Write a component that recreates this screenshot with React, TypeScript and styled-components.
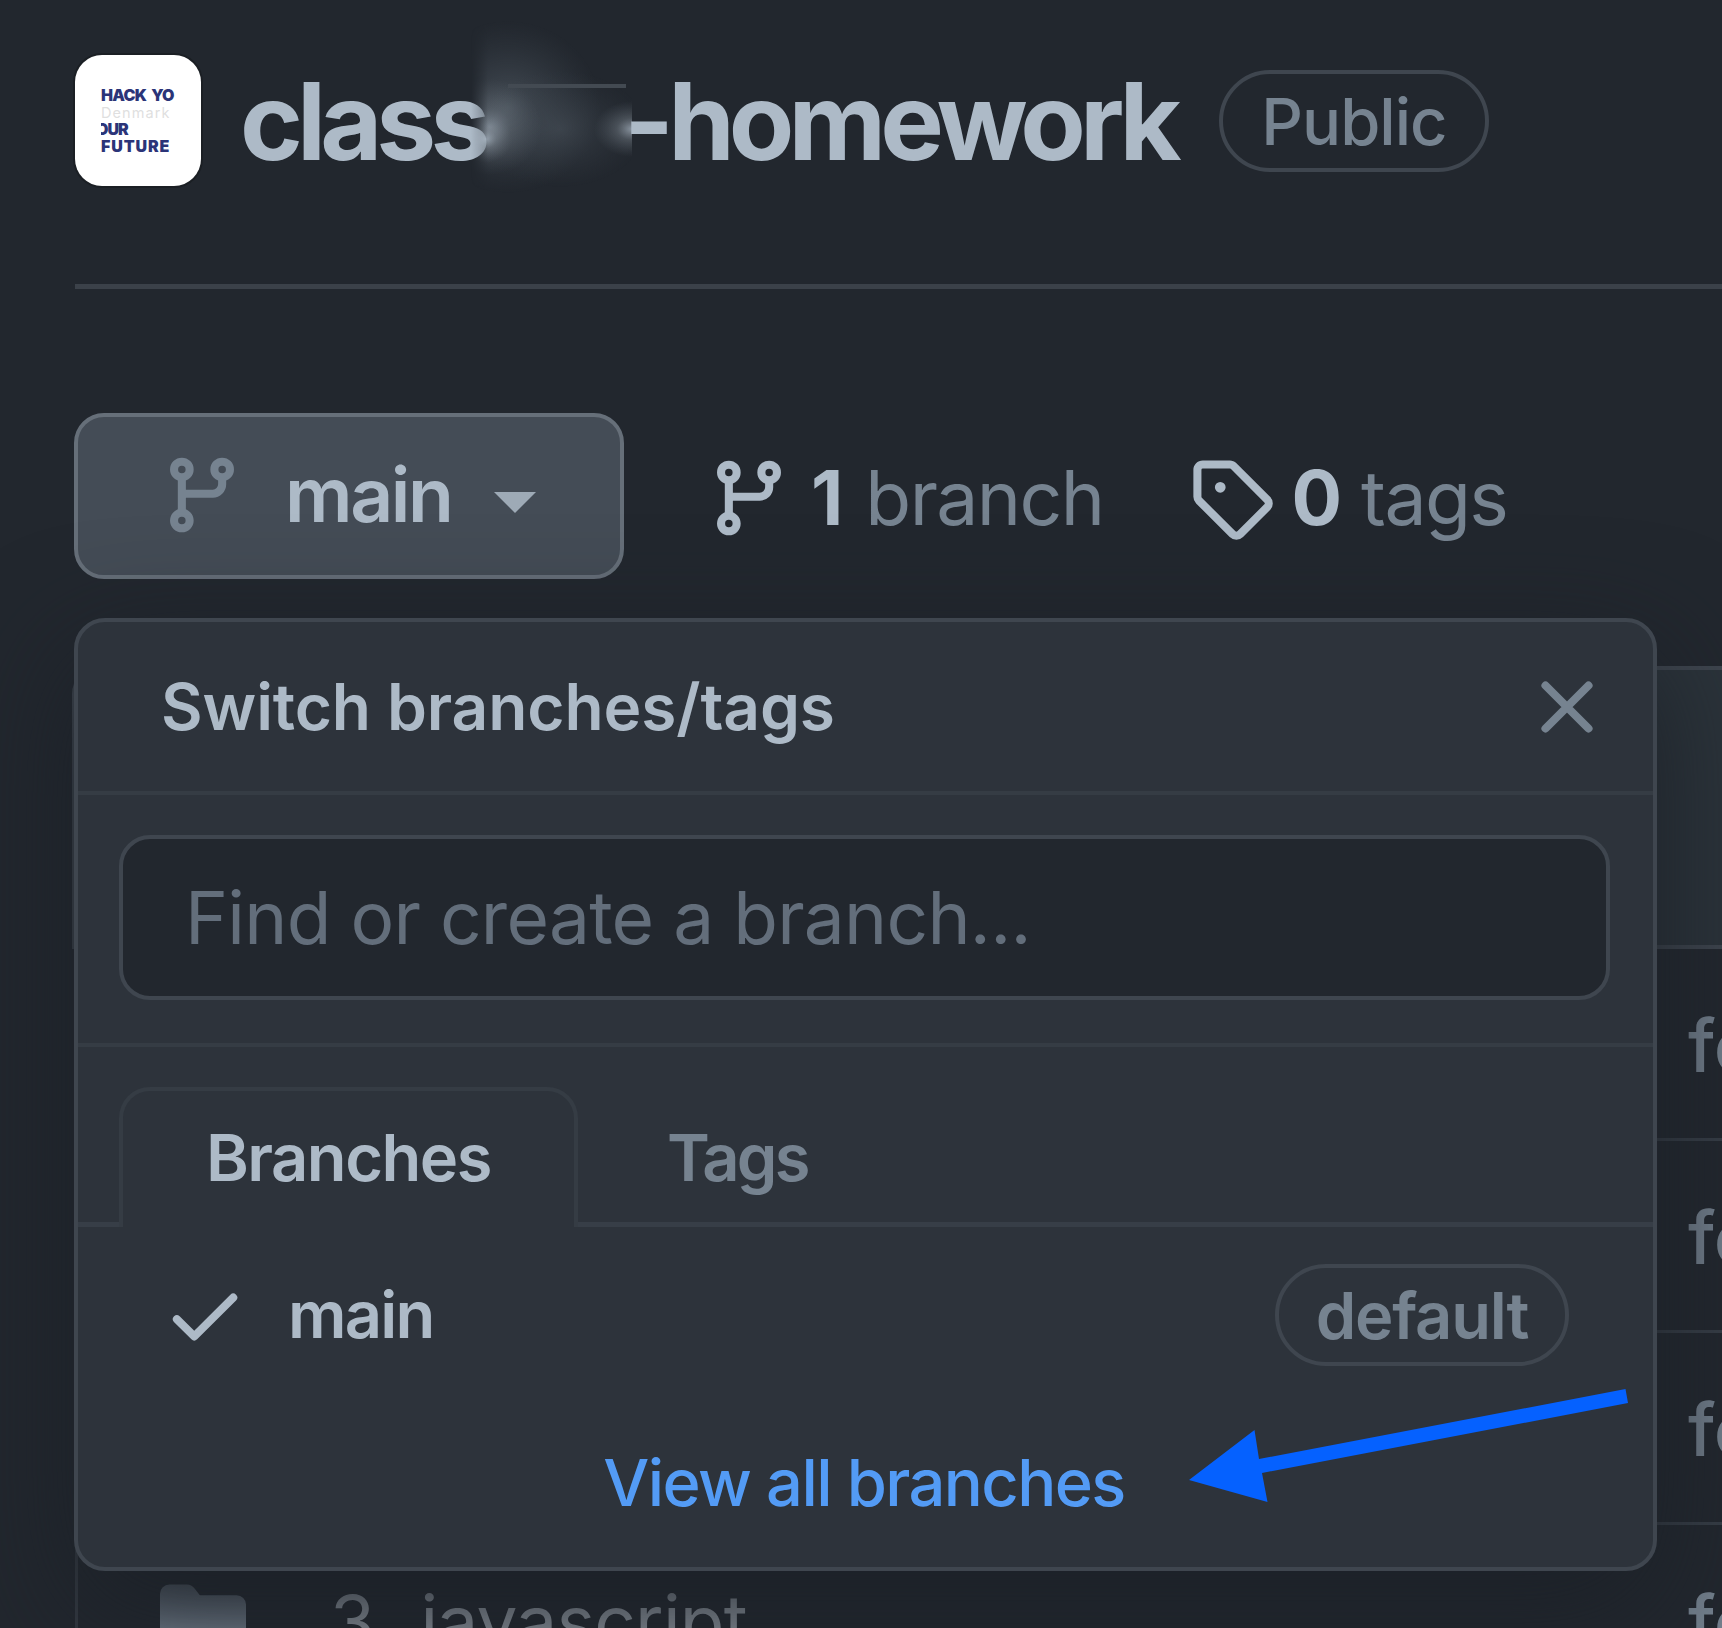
import React from "react";
import styled, { createGlobalStyle } from "styled-components";

const Global = createGlobalStyle`
  *, *::before, *::after { box-sizing: border-box; }
  body { margin: 0; background: #22272e; }
`;

const Page = styled.main`
  position: relative;
  width: 1722px;
  height: 1628px;
  overflow: hidden;
  background: #22272e;
  color: #adbac7;
  font-family: Inter, "Liberation Sans", sans-serif;
`;

const Label = styled.span<{
  $size: number;
  $weight?: number;
  $spacing?: number;
  $color?: string;
  $gap?: number;
  $width?: number;
}>`
  flex: none;
  width: ${(p) => (p.$width ? `${p.$width}px` : "auto")};
  margin-left: ${(p) => p.$gap ?? 0}px;
  font-size: ${(p) => p.$size}px;
  font-weight: ${(p) => p.$weight ?? 400};
  letter-spacing: ${(p) => p.$spacing ?? 0}px;
  color: ${(p) => p.$color ?? "#adbac7"};
  line-height: 1.2;
  white-space: nowrap;
`;

const RepoHeader = styled.header`
  display: flex;
  align-items: center;
  height: 186px;
  padding: 55px 0 0 75px;
`;

const Avatar = styled.div`
  display: flex;
  flex-direction: column;
  flex: none;
  width: 126px;
  height: 131px;
  margin-right: 39px;
  padding: 32px 25px 0 26px;
  border-radius: 27px;
  background: #fff;
  box-shadow: 0 0 0 2px #1b1f24;
`;

const AvatarLine = styled.span<{ $faint?: boolean; $spacing?: number; $indent?: number }>`
  overflow: hidden;
  width: 75px;
  height: 17px;
  font-size: ${(p) => (p.$faint ? 14.5 : 16)}px;
  font-weight: ${(p) => (p.$faint ? 400 : 900)};
  letter-spacing: ${(p) => p.$spacing ?? 0}px;
  text-indent: ${(p) => p.$indent ?? 0}px;
  line-height: 17px;
  white-space: pre;
  color: ${(p) => (p.$faint ? "#dfdfdf" : "#2b3478")};
`;

const RepoName = styled.h1`
  display: flex;
  align-items: center;
  margin: 0;
  padding-top: 1px;
`;

const Smudge = styled.svg`
  flex: none;
  width: 165px;
  height: 200px;
  margin: -40px -11px -40px -20px;
`;

const Pill = styled.span<{ $width: number }>`
  display: flex;
  align-items: center;
  justify-content: center;
  flex: none;
  width: ${(p) => p.$width}px;
  height: 102px;
  padding-top: 2px;
  border: 4px solid #3f464f;
  border-radius: 51px;
`;

const Rule = styled.hr`
  height: 5px;
  margin: 98px 0 0 75px;
  border: 0;
  background: #3b4149;
`;

const Toolbar = styled.div`
  display: flex;
  align-items: center;
  height: 167px;
  margin: 123px 0 0 74px;
`;

const BranchButton = styled.button`
  display: flex;
  align-items: center;
  flex: none;
  width: 550px;
  height: 166px;
  padding: 0 0 1px 81px;
  border: 4px solid #666f79;
  border-radius: 30px;
  background: #444c56;
  font-family: inherit;
`;

const Caret = styled.i`
  width: 0;
  height: 0;
  margin: 15px 0 0 42px;
  border: 21px solid transparent;
  border-top-color: #9eaab6;
  border-bottom: 0;
`;

const Stat = styled.span<{ $gap: number }>`
  display: flex;
  align-items: center;
  margin: 5px 0 0 ${(p) => p.$gap}px;
`;

const FileTable = styled.section`
  height: 1000px;
  margin: 87px 0 0 75px;
  border-left: 3px solid #343a42;
`;

const CommitBar = styled.div`
  height: 283px;
  margin-left: -6px;
  border: 4px solid #3f464f;
  border-right: 0;
  border-radius: 28px 0 0 0;
  background: #2b333a;
`;

const FileRow = styled.div`
  display: flex;
  align-items: center;
  height: 192px;
  padding: 4px 0 0 82px;
  border-bottom: 3px solid #373e47;
`;

const FileName = styled.div`
  display: flex;
  align-items: center;
  flex: none;
  width: 1528px;
`;

const Menu = styled.div`
  position: absolute;
  left: 74px;
  top: 618px;
  display: flex;
  flex-direction: column;
  width: 1583px;
  height: 953px;
  border: 4px solid #3f464f;
  border-radius: 31px;
  background: #2d333b;
  box-shadow: 0 40px 120px #1c2128;
`;

const MenuHeader = styled.div`
  display: flex;
  align-items: center;
  justify-content: space-between;
  height: 173px;
  padding: 1px 43px 0 83px;
  border-bottom: 4px solid #353c44;
`;

const Filter = styled.div`
  height: 252px;
  padding: 40px 43px 0 41px;
  border-bottom: 4px solid #353c44;
`;

const Field = styled.div`
  display: flex;
  align-items: center;
  height: 165px;
  padding-left: 62px;
  border: 4px solid #3f464f;
  border-radius: 31px;
  background: #22272e;
`;

const Tabs = styled.div`
  display: flex;
  height: 180px;
`;

const TabLine = styled.div<{ $grow?: boolean }>`
  flex: ${(p) => (p.$grow ? "1" : "0 0 41px")};
  display: flex;
  align-items: center;
  padding: 46px 0 0 ${(p) => (p.$grow ? 89 : 0)}px;
  border-bottom: 5px solid #373e47;
`;

const ActiveTab = styled.div`
  display: flex;
  align-items: center;
  width: 459px;
  margin-top: 40px;
  padding: 0 0 2px 83px;
  border: 4px solid #353c44;
  border-bottom: 0;
  border-radius: 31px 31px 0 0;
`;

const BranchItem = styled.div`
  display: flex;
  align-items: center;
  height: 175px;
  padding: 0 84px 0 84px;
`;

const Push = styled.div`
  flex: 1;
`;

const MenuFooter = styled.div`
  display: flex;
  align-items: center;
  justify-content: center;
  flex: 1;
  padding: 0 3px 3px 0;
`;

const Pointer = styled.svg`
  position: absolute;
  left: 1180px;
  top: 1380px;
  width: 460px;
  height: 130px;
`;

const Icon = styled.svg`
  flex: none;
  width: 86px;
  height: 86px;
`;

function BranchIcon({ color }: { color: string }) {
  return (
    <Icon viewBox="0 0 16 16" fill="none" stroke={color} strokeWidth="1.5">
      <circle cx="4.25" cy="3.25" r="1.45" />
      <circle cx="11.75" cy="3.25" r="1.45" />
      <circle cx="4.25" cy="12.75" r="1.45" />
      <path d="M4.25 4.8v6.4M11.75 4.8V6A1.75 1.75 0 0 1 10 7.75H4.25" />
    </Icon>
  );
}

function TagIcon() {
  return (
    <Icon viewBox="0 0 16 16" fill="#adbac7" fillRule="evenodd">
      <path d="M2.5 7.775V2.75a.25.25 0 0 1 .25-.25h5.025a.25.25 0 0 1 .177.073l6.25 6.25a.25.25 0 0 1 0 .354l-5.025 5.025a.25.25 0 0 1-.354 0l-6.25-6.25a.25.25 0 0 1-.073-.177zm-1.5 0V2.75C1 1.784 1.784 1 2.75 1h5.025c.464 0 .91.184 1.238.513l6.25 6.25a1.75 1.75 0 0 1 0 2.474l-5.026 5.026a1.75 1.75 0 0 1-2.474 0l-6.25-6.25A1.75 1.75 0 0 1 1 7.775zM6 5a1 1 0 1 0 0 2 1 1 0 0 0 0-2z" />
    </Icon>
  );
}

function CloseIcon() {
  return (
    <Icon viewBox="0 0 16 16" fill="none" stroke="#768390" strokeWidth="1.5" strokeLinecap="round">
      <path d="M4 4l8 8M12 4l-8 8" />
    </Icon>
  );
}

function CheckIcon() {
  return (
    <Icon viewBox="0 0 16 16" fill="#adbac7">
      <path d="M13.78 4.22a.75.75 0 0 1 0 1.06l-7.25 7.25a.75.75 0 0 1-1.06 0L2.22 9.28a.75.75 0 0 1 1.06-1.06L6 10.94l6.72-6.72a.75.75 0 0 1 1.06 0z" />
    </Icon>
  );
}

function FolderIcon() {
  return (
    <Icon viewBox="0 0 16 16">
      <defs>
        <linearGradient id="folder" x1="0" y1="0" x2="0" y2="1">
          <stop offset="0" stopColor="#5a646f" />
          <stop offset=".6" stopColor="#7b8896" />
        </linearGradient>
      </defs>
      <path
        fill="url(#folder)"
        d="M1.75 1A1.75 1.75 0 0 0 0 2.75v10.5C0 14.216.784 15 1.75 15h12.5A1.75 1.75 0 0 0 16 13.25v-8.5A1.75 1.75 0 0 0 14.25 3H7.5a.25.25 0 0 1-.2-.1l-.9-1.2C6.07 1.26 5.55 1 5 1H1.75z"
      />
    </Icon>
  );
}

const rows = ["", "", "", "3_"];

export default function App() {
  return (
    <Page>
      <Global />
      <RepoHeader>
        <Avatar>
          <AvatarLine $spacing={-0.7}>HACK  YO</AvatarLine>
          <AvatarLine $faint $spacing={1.1}>Denmark</AvatarLine>
          <AvatarLine $spacing={-1} $indent={-5}>OUR</AvatarLine>
          <AvatarLine $spacing={0.9}>FUTURE</AvatarLine>
        </Avatar>
        <RepoName>
          <Label $size={107} $weight={700} $spacing={-5.9} $width={250}>class</Label>
          <Smudge viewBox="470 20 165 200">
            <defs>
              <radialGradient id="haze">
                <stop offset="0" stopColor="#4c555e" stopOpacity=".85" />
                <stop offset=".5" stopColor="#424a53" stopOpacity=".45" />
                <stop offset="1" stopColor="#3a424a" stopOpacity="0" />
              </radialGradient>
              <radialGradient id="spot">
                <stop offset="0" stopColor="#adbac7" stopOpacity=".75" />
                <stop offset=".4" stopColor="#8b959f" stopOpacity=".35" />
                <stop offset="1" stopColor="#6a737d" stopOpacity="0" />
              </radialGradient>
              <linearGradient id="edge" gradientUnits="userSpaceOnUse" x1="471" y1="0" x2="488" y2="0">
                <stop offset="0" stopColor="#000" />
                <stop offset="1" stopColor="#fff" />
              </linearGradient>
              <mask id="fade" maskUnits="userSpaceOnUse" x="470" y="20" width="165" height="200">
                <rect x="470" y="20" width="162" height="200" fill="url(#edge)" />
              </mask>
            </defs>
            <path d="M477 80h14v30Q481 104 477 98z" fill="#22272e" />
            <g mask="url(#fade)">
              <ellipse cx="508" cy="106" rx="92" ry="86" fill="url(#haze)" />
              <ellipse cx="560" cy="128" rx="85" ry="58" fill="url(#haze)" opacity=".6" />
              <ellipse cx="490" cy="126" rx="52" ry="48" fill="url(#spot)" opacity=".75" />
              <ellipse cx="486" cy="138" rx="26" ry="24" fill="url(#spot)" />
              <ellipse cx="632" cy="128" rx="38" ry="28" fill="url(#spot)" />
            </g>
            <rect x="508" y="83" width="118" height="4" fill="#434a52" />
          </Smudge>
          <Label $size={107} $weight={700} $spacing={-5.9} $width={595}>-homework</Label>
        </RepoName>
        <Pill $width={270}>
          <Label $size={65} $weight={500} $spacing={-1} $color="#768390">Public</Label>
        </Pill>
      </RepoHeader>
      <Rule />
      <Toolbar>
        <BranchButton>
          <BranchIcon color="#768390" />
          <Label $size={75} $weight={600} $spacing={-2.4} $gap={40}>main</Label>
          <Caret />
        </BranchButton>
        <Stat $gap={82}>
          <BranchIcon color="#adbac7" />
          <Label $size={75} $weight={700} $gap={19}>1</Label>
          <Label $size={75} $spacing={-1.6} $gap={22} $color="#768390">branch</Label>
        </Stat>
        <Stat $gap={84}>
          <TagIcon />
          <Label $size={75} $weight={700} $gap={18}>0</Label>
          <Label $size={75} $spacing={-1.6} $gap={19} $color="#768390">tags</Label>
        </Stat>
      </Toolbar>
      <FileTable>
        <CommitBar />
        {rows.map((prefix, i) => (
          <FileRow key={i}>
            <FileName>
              {prefix && (
                <>
                  <FolderIcon />
                  <Label $size={73} $spacing={6} $gap={84} $color="#9aa2ab">{prefix}</Label>
                  <Label $size={73} $spacing={-0.8} $color="#9aa2ab">javascript</Label>
                </>
              )}
            </FileName>
            <Label $size={73} $weight={500} $color="#768390">fe</Label>
          </FileRow>
        ))}
      </FileTable>
      <Menu>
        <MenuHeader>
          <Label $size={64} $weight={600} $spacing={-0.1}>Switch branches/tags</Label>
          <CloseIcon />
        </MenuHeader>
        <Filter>
          <Field>
            <Label $size={73} $spacing={-0.75} $color="#636e7b">Find or create a branch...</Label>
          </Field>
        </Filter>
        <Tabs>
          <TabLine />
          <ActiveTab>
            <Label $size={65} $weight={600} $spacing={-1.5}>Branches</Label>
          </ActiveTab>
          <TabLine $grow>
            <Label $size={65} $weight={600} $spacing={-2.8} $color="#768390">Tags</Label>
          </TabLine>
        </Tabs>
        <BranchItem>
          <CheckIcon />
          <Label $size={65} $weight={600} $spacing={-1.8} $gap={40}>main</Label>
          <Push />
          <Pill $width={294}>
            <Label $size={65} $weight={600} $spacing={-1.2} $color="#768390">default</Label>
          </Pill>
        </BranchItem>
        <MenuFooter>
          <Label $size={65} $weight={500} $spacing={-1.6} $color="#539bf5">View all branches</Label>
        </MenuFooter>
      </Menu>
      <Pointer viewBox="1180 1380 460 130">
        <path fill="#0561ff" d="M1189 1480L1254.500 1430L1259 1459L1625.500 1389L1628 1403L1262 1473L1267.500 1502z" />
      </Pointer>
    </Page>
  );
}
